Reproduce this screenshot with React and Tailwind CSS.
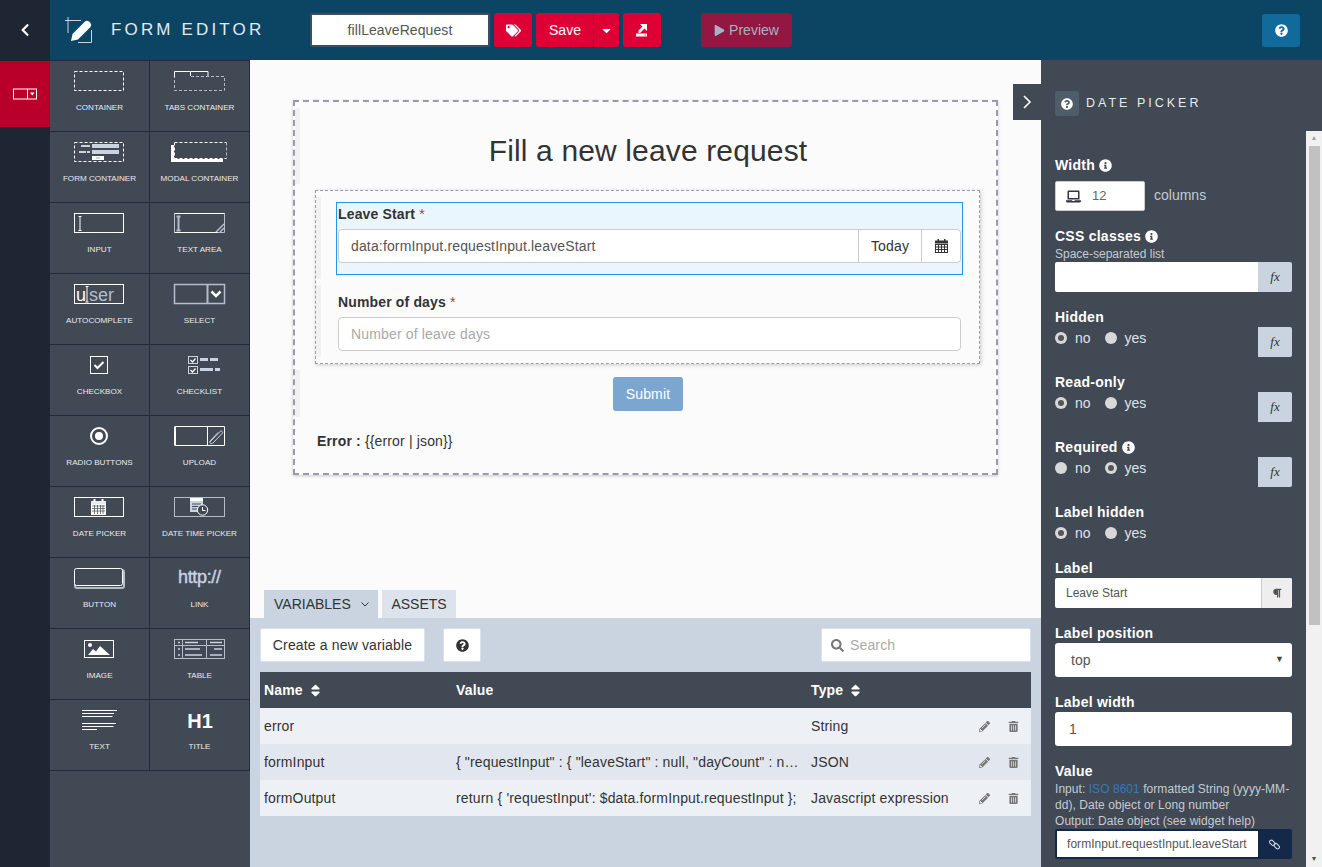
import {
  FaCaretDown,
  FaChevronLeft,
  FaInfoCircle,
  FaLaptop,
  FaParagraph,
  FaPencilAlt,
  FaPlay,
  FaQuestionCircle,
  FaSearch,
  FaSort,
  FaTags,
  FaTrashAlt,
} from 'react-icons/fa';

const W = '#ffffff';
const G = '#b4bec9';
const B = '#c9d4e0';

const palette = [
  {
    label: 'Container',
    icon: <rect x="24.5" y="10.5" width="49" height="19" fill="none" stroke={W} strokeDasharray="3 2" />,
  },
  {
    label: 'Tabs container',
    icon: (
      <g fill="none">
        <path d="M24.5 16V10.5H40.5V15M41 10.5H58V15" stroke={W} />
        <path d="M41 15.5H74.5V29.5H24.5V16" stroke={G} strokeDasharray="3 2" />
      </g>
    ),
  },
  {
    label: 'Form container',
    icon: (
      <g>
        <rect x="24.5" y="10.5" width="49" height="19" fill="none" stroke={W} strokeDasharray="3 2" />
        <rect x="42" y="12" width="27" height="4" fill={B} />
        <rect x="42" y="18" width="27" height="4" fill={B} />
        <rect x="42" y="24" width="12" height="4" fill={W} />
        <rect x="46" y="25" width="4" height="2" fill={B} />
        <rect x="31" y="13" width="9" height="2" fill={B} />
        <rect x="29" y="19" width="7" height="2" fill={B} />
        <rect x="37" y="19" width="3" height="2" fill={B} />
      </g>
    ),
  },
  {
    label: 'Modal container',
    icon: (
      <g fill="none">
        <path d="M24.5 10.5H76.5M24.5 26.500H76.500M24.5 10.500V26.500" stroke={W} strokeDasharray="3 2" />
        <path d="M76.5 10.500V26.500" stroke={G} strokeDasharray="3 2" />
        <path d="M22.5 13V28.5H73" stroke={W} strokeWidth="3" />
      </g>
    ),
  },
  {
    label: 'Input',
    icon: (
      <g fill="none" stroke={W}>
        <rect x="24.5" y="10.5" width="49" height="19" />
        <path d="M28.5 13.5H31.5M28.5 27.5H31.5M30 13.5V27.5" />
      </g>
    ),
  },
  {
    label: 'Text area',
    icon: (
      <g fill="none" stroke={G}>
        <path d="M24.5 29.5V10.5H74.5V29.5H24.5" />
        <path d="M24.5 10.5H74.5M24.5 29.5H68" stroke={W} />
        <path d="M26.5 13.5H30.5M26.5 27.5H30.5M28.5 13.5V27.5" strokeWidth="2" />
        <path d="M66 29L74 21M70 29L74 25" strokeWidth="1.5" />
      </g>
    ),
  },
  {
    label: 'Autocomplete',
    icon: (
      <g>
        <rect x="24.5" y="10.5" width="49" height="19" fill="none" stroke={W} />
        <text x="26" y="26.5" fontSize="18" fill={G} fontFamily="'Liberation Sans', sans-serif">
          <tspan fill={W}>u</tspan>
          <tspan dx="3">ser</tspan>
        </text>
        <path d="M35.500 12.5H38.500M35.500 28H38.500M37 12.5V28" stroke={W} fill="none" />
      </g>
    ),
  },
  {
    label: 'Select',
    icon: (
      <g fill="none">
        <rect x="24.5" y="10.5" width="50" height="19" stroke={G} strokeWidth="1.5" />
        <path d="M57.5 10V30" stroke={G} strokeWidth="2" />
        <path d="M61.5 17.5L66 22L70.5 17.5" stroke={W} strokeWidth="2.5" />
      </g>
    ),
  },
  {
    label: 'Checkbox',
    icon: (
      <g fill="none" stroke={W}>
        <rect x="40.5" y="11.5" width="17" height="17" />
        <path d="M44.5 20L47.5 23L53.5 17" strokeWidth="2" />
      </g>
    ),
  },
  {
    label: 'Checklist',
    icon: (
      <g>
        <g fill="none" stroke={B}>
          <rect x="38.5" y="11.5" width="9" height="7" />
          <rect x="38.5" y="21.5" width="9" height="7" />
          <path d="M40.5 15L42.5 17L45.5 13.5M40.5 25L42.5 27L45.5 23.5" stroke={W} strokeWidth="1.2" />
        </g>
        <rect x="50" y="13" width="8" height="3" fill={B} />
        <rect x="60" y="13" width="8" height="3" fill={B} />
        <rect x="50" y="23" width="13" height="3" fill={B} />
        <rect x="65" y="23" width="5" height="3" fill={B} />
      </g>
    ),
  },
  {
    label: 'Radio buttons',
    icon: (
      <g>
        <circle cx="49" cy="20" r="8" fill="none" stroke={W} strokeWidth="2" />
        <circle cx="49" cy="20" r="4" fill={W} />
      </g>
    ),
  },
  {
    label: 'Upload',
    icon: (
      <g fill="none">
        <path d="M25 10.5V29.5" stroke={W} strokeWidth="2" />
        <path d="M25 10.5H74.5V29.5H25M57.5 10V30" stroke={W} />
        <path
          d="M60 26L70 15.5C71.5 14 73.5 16 72 17.5L63 27C61 29 58.5 26.5 60.5 24.5L68 16.5"
          stroke={B}
        />
      </g>
    ),
  },
  {
    label: 'Date picker',
    icon: (
      <g>
        <rect x="24.5" y="10.5" width="49" height="19" fill="none" stroke={W} />
        <rect x="41" y="14" width="15" height="14" fill={W} />
        <rect x="41" y="14" width="15" height="3" fill="#e7ebf0" />
        <path d="M44.5 12V15M52.5 12V15" stroke={W} strokeWidth="2" />
        <path d="M42 19H55M42 21.5H55M42 24H55M44.5 18V27M47.5 18V27M50.5 18V27M53 18V27" stroke="#414954" strokeWidth="0.7" />
      </g>
    ),
  },
  {
    label: 'Date time picker',
    icon: (
      <g>
        <rect x="24.5" y="10.5" width="50" height="19" fill="none" stroke={G} />
        <rect x="40" y="13" width="13" height="12" fill={B} />
        <rect x="40" y="11" width="13" height="3" fill={W} />
        <path d="M42 17H51M42 19.5H51M42 22H47" stroke="#414954" />
        <circle cx="52.5" cy="23" r="5.2" fill="#414954" stroke={W} />
        <path d="M52.5 20V23.5H55.5" fill="none" stroke={W} />
      </g>
    ),
  },
  {
    label: 'Button',
    icon: (
      <g fill="none">
        <rect x="25" y="12" width="49" height="18" rx="2" stroke={G} strokeWidth="2" />
        <rect x="24.5" y="10.5" width="48" height="17" rx="2" fill="#414954" stroke={W} />
      </g>
    ),
  },
  {
    label: 'Link',
    icon: (
      <text
        x="28"
        y="25"
        fontSize="18"
        fill={B}
        stroke={B}
        strokeWidth="0.4"
        fontFamily="'Liberation Sans', sans-serif"
        textLength="43"
      >
        http://
      </text>
    ),
  },
  {
    label: 'Image',
    icon: (
      <g>
        <rect x="34.5" y="11.5" width="29" height="17" fill="none" stroke={W} />
        <circle cx="40" cy="16" r="2" fill={W} />
        <path d="M38 26L43 20L46 22.5L50 17L60 26Z" fill={W} />
      </g>
    ),
  },
  {
    label: 'Table',
    icon: (
      <g>
        <rect x="24.5" y="10.5" width="50" height="19" fill="none" stroke={G} />
        <path d="M32.5 10V30M56.5 10V30M24 16.5H75" stroke={G} fill="none" />
        <path d="M28 13.5H30M35 13.5H48M60 13.5H72M28 20H30M35 20H50M64 20H72M28 26H30M35 26H52M60 26H72" stroke={B} strokeWidth="1.6" />
      </g>
    ),
  },
  {
    label: 'Text',
    icon: (
      <path
        d="M32 10.5H67M32 13.5H64M32 16.5H62.5M32 23.5H66M32 26.5H63.5M32 29.5H47"
        stroke={W}
        fill="none"
      />
    ),
  },
  {
    label: 'Title',
    icon: (
      <text x="50" y="28" textAnchor="middle" fontSize="20" fontWeight="700" fill={W} fontFamily="'Liberation Sans', sans-serif">
        H1
      </text>
    ),
  },
];

const variables = [
  { name: 'error', value: '', type: 'String' },
  {
    name: 'formInput',
    value: '{ "requestInput" : { "leaveStart" : null, "dayCount" : null } }',
    type: 'JSON',
  },
  {
    name: 'formOutput',
    value: "return { 'requestInput': $data.formInput.requestInput };",
    type: 'Javascript expression',
  },
];

function PaletteCell({ item }) {
  return (
    <div className="h-[71px] border-r border-b border-[#252b38]">
      <svg width="99" height="40" viewBox="0 0 99 40" className="block">
        {item.icon}
      </svg>
      <div className="pt-px text-center text-[8.1px] leading-[12px] uppercase text-[#e8ebef]">{item.label}</div>
    </div>
  );
}

function Fx() {
  return (
    <div className="flex h-[30px] w-[34px] shrink-0 items-center justify-center rounded-r-[2px] bg-[#c9d4e0] font-['Liberation_Serif',serif] text-[13px] italic text-[#333]">
      fx
    </div>
  );
}

function Label({ children, info }) {
  return (
    <div className="flex h-5 items-center gap-[4px] text-[14px] font-bold tracking-[0.25px] text-white">
      {children}
      {info && <FaInfoCircle className="text-[13px]" />}
    </div>
  );
}

function Radio({ checked, label }) {
  return (
    <span className="flex items-center gap-[8px] text-[14px] text-[#dfe3e8]">
      <span className="flex h-3 w-3 items-center justify-center rounded-full bg-[#d8d8d8]">
        {checked && <span className="h-[6px] w-[6px] rounded-full bg-[#555]" />}
      </span>
      {label}
    </span>
  );
}

function YesNo({ label, info, value, fx }) {
  return (
    <div className="flex h-[65px] justify-between">
      <div>
        <Label info={info}>{label}</Label>
        <div className="mt-px flex h-5 items-center gap-[14px]">
          <Radio label="no" checked={value === 'no'} />
          <Radio label="yes" checked={value === 'yes'} />
        </div>
      </div>
      {fx && (
        <div className="mt-5">
          <Fx />
        </div>
      )}
    </div>
  );
}

function RightPanel() {
  return (
    <aside className="flex w-[281px] shrink-0 flex-col bg-[#414954]">
      <div className="flex h-[71px] shrink-0 items-start gap-[7px] pt-[31px] pl-[14px]">
        <div className="flex h-[25px] w-[24px] items-center justify-center rounded-[2px] bg-[#4f5c69] text-[12px] text-white">
          <FaQuestionCircle />
        </div>
        <div className="pt-[3px] text-[12.5px] leading-[18px] tracking-[3px] text-[#e8ecf0]">DATE PICKER</div>
      </div>
      <div className="flex min-h-0 flex-1">
        <div className="w-[265px] shrink-0 overflow-hidden pt-6 pl-[14px]">
          <div className="w-[237px]">
            <Label info>Width</Label>
            <div className="mt-[6px] flex items-center gap-[9px]">
              <div className="flex h-[30px] w-[90px] items-center gap-[11px] rounded-[2px] border border-[#ccc] bg-white pl-[10px] text-[13px] text-[#666]">
                <FaLaptop className="text-[15px] text-[#334]" />
                12
              </div>
              <span className="pb-px text-[14px] text-[#c5cbd2]">columns</span>
            </div>

            <div className="mt-[15px]">
              <Label info>CSS classes</Label>
            </div>
            <div className="h-4 text-[12px] leading-4 text-[#c5cbd2]">Space-separated list</div>
            <div className="flex h-[30px]">
              <div className="flex-1 rounded-l-[2px] bg-white" />
              <Fx />
            </div>

            <div className="mt-[15px]">
              <YesNo label="Hidden" value="no" fx />
              <YesNo label="Read-only" value="no" fx />
              <YesNo label="Required" info value="yes" fx />
              <div className="h-[56px]">
                <Label>Label hidden</Label>
                <div className="mt-px flex h-5 items-center gap-[14px]">
                  <Radio label="no" checked />
                  <Radio label="yes" />
                </div>
              </div>
            </div>

            <Label>Label</Label>
            <div className="flex h-[30px] rounded-[2px] bg-white text-[12px] text-[#555]">
              <div className="flex flex-1 items-center pl-[11px]">Leave Start</div>
              <div className="flex w-[31px] items-center justify-center rounded-r-[2px] border-l border-[#ccc] bg-[#eeeeee] text-[10px] text-[#555]">
                <FaParagraph />
              </div>
            </div>

            <div className="mt-[15px]">
              <Label>Label position</Label>
            </div>
            <div className="flex h-[34px] items-center justify-between rounded-[3px] bg-white pr-[8px] pl-[16px] text-[14px] text-[#555]">
              top
              <span className="text-[9px] text-[#444]">▼</span>
            </div>

            <div className="mt-[15px]">
              <Label>Label width</Label>
            </div>
            <div className="flex h-[34px] items-center rounded-[3px] bg-white pl-[14px] text-[14px] text-[#555]">1</div>

            <div className="mt-[15px]">
              <Label>Value</Label>
            </div>
            <div className="text-[12px] leading-4 tracking-[0.05px] text-[#c5cbd2]">
              <div>
                Input: <span className="text-[#337ab7]">ISO 8601</span> formatted String (yyyy-MM-
              </div>
              <div>dd), Date object or Long number</div>
              <div>Output: Date object (see widget help)</div>
            </div>
            <div className="flex h-[30px] rounded-[2px] bg-[#14294a] p-[2px]">
              <div className="flex w-[201px] items-center bg-white pl-[10px] text-[12px] tracking-[0.05px] text-[#555]">
                formInput.requestInput.leaveStart
              </div>
              <div className="flex flex-1 items-center justify-center text-[#c9d4e0]">
                <svg width="11" height="11" viewBox="0 0 11 11" fill="none" stroke="currentColor" strokeWidth="1.1">
                  <rect x="0.2" y="2" width="6" height="3.600" rx="1.800" transform="rotate(45 3.200 3.800)" />
                  <rect x="4.800" y="5.400" width="6" height="3.600" rx="1.800" transform="rotate(45 7.800 7.200)" />
                </svg>
              </div>
            </div>
          </div>
        </div>
        <div className="flex w-4 shrink-0 flex-col items-center bg-[#f1f1f1]">
          <div className="flex h-[15px] items-center justify-center text-[7px] text-[#a3a3a3]">▲</div>
          <div className="h-[479px] w-[11px] bg-[#c1c1c1]" />
          <div className="mt-auto flex h-[15px] items-center justify-center text-[7px] text-[#505050]">▼</div>
        </div>
      </div>
    </aside>
  );
}

function FormCanvas() {
  return (
    <div className="relative flex-1 overflow-hidden bg-[#fbfbfb] tracking-[0.15px]">
      <div className="mt-10 ml-[43px] h-[375px] w-[705px] border-2 border-dashed border-[#9d99ad] pt-[6px] shadow-[0_1px_3px_rgba(0,0,0,0.2)]">
        <div className="flex h-[76px] items-center justify-center border-l-[5px] border-[#f1f1f1]">
          <h1 className="pt-[9px] text-[30px] leading-[33px] tracking-[0.14px] text-[#333]">Fill a new leave request</h1>
        </div>
        <div className="mt-[6px] ml-[20px] h-[174px] w-[665px] border border-dashed border-[#9d99ad] pt-[6px] shadow-[1px_1px_4px_rgba(0,0,0,0.2)]">
          <div className="h-[82px] border-l-[5px] border-[#f1f1f1] pt-[5px] pl-[15px]">
            <div className="h-[73px] w-[627px] border border-[#2196f3] bg-[#ebf5fe] px-px">
              <div className="flex h-[23px] items-center text-[14px] font-bold text-[#333]">
                Leave Start <span className="ml-1 font-normal text-[#a94442]">*</span>
              </div>
              <div className="mt-[3px] flex h-[34px] w-[623px] rounded-[4px] border border-[#ccc] bg-white text-[14px] text-[#555]">
                <div className="flex flex-1 items-center pl-3">data:formInput.requestInput.leaveStart</div>
                <div className="flex w-[63px] items-center justify-center border-l border-[#ccc] text-[#333]">Today</div>
                <div className="flex w-[39px] items-center justify-center border-l border-[#ccc] text-[#333]">
                  <svg width="13" height="14" viewBox="0 0 13 14" fill="currentColor">
                    <path d="M0 1.500H2.500V0H4V1.500H9V0H10.500V1.500H13V4.500H0Z" />
                    <path
                      d="M0 5H13V14H0ZM1 6V7.500H3V6ZM4 6V7.500H6V6ZM7 6V7.500H9V6ZM10 6V7.500H12V6ZM1 8.500V10H3V8.500ZM4 8.500V10H6V8.500ZM7 8.500V10H9V8.500ZM10 8.500V10H12V8.500ZM1 11V13H3V11ZM4 11V13H6V11ZM7 11V13H9V11ZM10 11V13H12V11Z"
                      fillRule="evenodd"
                    />
                  </svg>
                </div>
              </div>
            </div>
          </div>
          <div className="mt-[6px] h-[72px] border-l-[5px] border-[#f1f1f1] pl-[17px]">
            <div className="flex h-[32px] items-end pb-[4px] text-[14px] font-bold text-[#333]">
              Number of days <span className="ml-1 font-normal text-[#a94442]">*</span>
            </div>
            <div className="flex h-[34px] w-[623px] items-center rounded-[4px] border border-[#ccc] bg-white pl-3 text-[14px] text-[#a9a9a9]">
              Number of leave days
            </div>
          </div>
        </div>
        <div className="mt-[6px] flex h-[47px] justify-center border-l-[5px] border-[#f1f1f1] pt-[7px]">
          <div className="flex h-[34px] w-[70px] items-center justify-center rounded-[3px] bg-[#7ba6cf] text-[14px] text-white">
            Submit
          </div>
        </div>
        <div className="mt-[14px] pl-[22px] text-[14px] leading-5 text-[#333]">
          <b>Error :</b> {'{{error | json}}'}
        </div>
      </div>
      <div className="absolute top-6 right-0 flex h-9 w-7 items-center justify-center bg-[#414954] text-white">
        <svg width="12" height="16" viewBox="0 0 12 16" fill="none" stroke="currentColor" strokeWidth="1.6">
          <path d="M3 2L9 8L3 14" />
        </svg>
      </div>
    </div>
  );
}

function BottomPanel() {
  return (
    <div className="shrink-0 tracking-[0.15px]">
      <div className="flex h-[28px] gap-1 bg-[#fbfbfb] pl-[14px] text-[14px] text-[#333]">
        <div className="flex w-[114px] items-center gap-[10px] bg-[#c9d4e0] pl-[10px] tracking-normal">
          VARIABLES
          <svg width="8" height="5" viewBox="0 0 8 5" fill="none" stroke="currentColor">
            <path d="M0.5 0.5L4 4L7.5 0.5" />
          </svg>
        </div>
        <div className="flex w-[74px] items-center justify-center bg-[#dce3ec] tracking-normal">ASSETS</div>
      </div>
      <div className="h-[249px] bg-[#c9d4e0] px-[10px] pt-[10px]">
        <div className="flex h-[34px] w-[771px] items-stretch text-[14px] text-[#333]">
          <div className="flex w-[165px] items-center justify-center rounded-[2px] border border-[#dbe1e8] bg-white">
            Create a new variable
          </div>
          <div className="ml-[18px] flex w-[38px] items-center justify-center rounded-[2px] border border-[#dbe1e8] bg-white text-[13px]">
            <FaQuestionCircle />
          </div>
          <div className="ml-auto flex w-[210px] items-center gap-[6px] rounded-[2px] border border-[#dbe1e8] bg-white pl-[9px] text-[#a9a9a9]">
            <FaSearch className="text-[13px] text-[#777]" />
            Search
          </div>
        </div>
        <table className="mt-[10px] w-[771px] table-fixed border-collapse text-[14px] text-[#333]">
          <thead>
            <tr className="h-9 bg-[#414954] text-left font-bold text-white">
              <th className="w-[192px] pl-1">
                <span className="flex items-center gap-[5px]">
                  Name <FaSort className="text-[15px]" />
                </span>
              </th>
              <th className="w-[355px] pl-1">Value</th>
              <th className="w-[164px] pl-1">
                <span className="flex items-center gap-[5px]">
                  Type <FaSort className="text-[15px]" />
                </span>
              </th>
              <th />
            </tr>
          </thead>
          <tbody>
            {variables.map((v, i) => (
              <tr key={v.name} className={`h-9 ${i % 2 ? 'bg-[#e2e7ef]' : 'bg-[#edf1f6]'}`}>
                <td className="pl-1">{v.name}</td>
                <td className="truncate pr-2 pl-1">{v.value}</td>
                <td className="pl-1 whitespace-nowrap">{v.type}</td>
                <td>
                  <div className="flex items-center gap-[18px] pl-[8px] text-[11px] text-[#777]">
                    <FaPencilAlt />
                    <FaTrashAlt />
                  </div>
                </td>
              </tr>
            ))}
          </tbody>
        </table>
      </div>
    </div>
  );
}

function TopBar() {
  return (
    <header className="flex h-[60px] shrink-0 items-center text-[14px]">
      <div className="flex h-full w-[50px] items-center justify-center bg-[#1f2633] text-[14px] text-white">
        <FaChevronLeft />
      </div>
      <div className="flex h-full flex-1 items-center bg-[#0c4564]">
        <svg width="30" height="30" viewBox="0 0 30 30" fill="none" className="ml-[14px]">
          <path d="M4 2V18M1 5.500H17M27.500 15V27.500H14" stroke="#c9d4e0" />
          <path d="M7 26L8.500 19L21 6.500Q23 5 25 6.500L26.500 8Q28 10 26.500 12L14 24.500Z" fill="#fff" />
        </svg>
        <span className="ml-[17px] w-[199px] text-[17px] font-light tracking-[3.15px] text-[#e4e9ee]">FORM EDITOR</span>
        <div className="flex h-[34px] w-[180px] items-center justify-center rounded-[2px] border-2 border-[#3d4e5e] bg-white tracking-[0.08px] text-[#555]">
          fillLeaveRequest
        </div>
        <div className="ml-1 flex h-[34px] w-[38px] items-center justify-center rounded-[3px] bg-[#de0035] text-[15px] text-white">
          <FaTags />
        </div>
        <div className="ml-1 flex h-[34px] w-[83px] rounded-[3px] bg-[#de0035] text-white">
          <div className="flex w-[58px] items-center justify-center border-r border-[#c80030] pl-px">Save</div>
          <div className="flex flex-1 items-center justify-center text-[13px]">
            <FaCaretDown />
          </div>
        </div>
        <div className="ml-1 flex h-[34px] w-[38px] items-center justify-center rounded-[3px] bg-[#de0035]">
          <svg width="12" height="13" viewBox="0 0 12 13" fill="#fff">
            <path d="M4 0H11V7L8.500 4.500L4 9H2.500V6.500L6.500 2.500Z" />
            <path d="M0 9.500H11V12.500H0Z" />
            <rect x="8.500" y="10.500" width="1.200" height="1" fill="#de0035" />
          </svg>
        </div>
        <div className="ml-10 flex h-[34px] w-[91px] items-center justify-center gap-[4px] rounded-[3px] bg-[#921743] text-[#a5b4c4]">
          <FaPlay className="text-[11px]" />
          Preview
        </div>
        <div className="mr-[22px] ml-auto flex h-[33px] w-[38px] items-center justify-center rounded-[3px] bg-[#106a9c] text-[13px] text-white">
          <FaQuestionCircle />
        </div>
      </div>
    </header>
  );
}

export default function App() {
  return (
    <div className="flex h-[867px] w-[1322px] flex-col overflow-hidden font-['Liberation_Sans',sans-serif]">
      <TopBar />
      <div className="flex min-h-0 flex-1">
        <nav className="w-[50px] shrink-0 bg-[#1f2633] pt-px">
          <div className="flex h-[66px] items-center justify-center bg-[#b8002a]">
            <svg width="26" height="12" viewBox="0 0 26 12" fill="none" stroke="#fff">
              <rect x="1.500" y="1" width="23" height="10" />
              <path d="M15.500 1V11" />
              <path d="M18 4.500H22.500L20.250 7.500Z" fill="#fff" stroke="none" />
            </svg>
          </div>
        </nav>
        <div className="w-[200px] shrink-0 border-t border-[#252b38] bg-[#414954]">
          <div className="grid grid-cols-2">
            {palette.map((item) => (
              <PaletteCell key={item.label} item={item} />
            ))}
          </div>
        </div>
        <main className="flex min-w-0 flex-1 flex-col">
          <FormCanvas />
          <BottomPanel />
        </main>
        <RightPanel />
      </div>
    </div>
  );
}
